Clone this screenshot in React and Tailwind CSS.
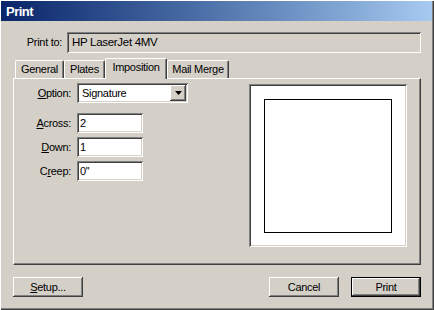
export default function App() {
  const raised =
    "shadow-[inset_-1px_-1px_0_#404040,inset_1px_1px_0_#ffffff,inset_-2px_-2px_0_#808080]";
  const sunken =
    "shadow-[inset_1px_1px_0_#808080,inset_-1px_-1px_0_#ffffff,inset_2px_2px_0_#404040,inset_-2px_-2px_0_#d4d0c8]";
  const tabBase =
    "h-[18px] flex items-center justify-center border-t border-l border-r border-t-white border-l-white border-r-[#404040] rounded-tl-[2px] rounded-tr-[2px] shadow-[inset_-1px_0_0_#808080]";

  return (
    <div className="w-[434px] h-[310px] bg-[#d4d0c8] pt-px pl-px pr-[2px] pb-[2px] shadow-[inset_1px_1px_0_#ffffff,inset_-1px_-1px_0_#404040,inset_-2px_-2px_0_#808080] flex flex-col text-[11px] leading-none text-black font-['Liberation_Sans',Arial,sans-serif] tracking-[-0.3px] overflow-hidden select-none">
      {/* Title bar */}
      <div className="h-[20px] bg-linear-to-r from-[#0a246a] to-[#a6caf0] flex items-center pl-[5px] text-white font-bold text-[13px] tracking-[-0.5px]">
        Print
      </div>

      {/* Content */}
      <div className="pl-[12px] flex flex-col">
        {/* Print to */}
        <div className="mt-[11px] flex items-center h-[21px]">
          <div className="w-[49px] text-right">Print to:</div>
          <div
            className={`ml-[5px] w-[354px] h-[21px] bg-[#d4d0c8] pl-[5px] flex items-center text-[11.5px] ${sunken}`}
          >
            HP LaserJet 4MV
          </div>
        </div>

        {/* Tabs */}
        <div className="mt-[5px] h-[20px] flex items-end pl-[2px] relative z-10">
          <div className={`${tabBase} w-[49px]`}>General</div>
          <div className={`${tabBase} w-[41px]`}>Plates</div>
          <div
            className={`h-[21px] -mb-px bg-[#d4d0c8] w-[62px] flex items-center justify-center pb-[3px] border-t border-l border-r border-t-white border-l-white border-r-[#404040] rounded-tl-[2px] rounded-tr-[2px] shadow-[inset_-1px_0_0_#808080]`}
          >
            Imposition
          </div>
          <div className={`${tabBase} w-[62px]`}>Mail Merge</div>
        </div>

        {/* Panel */}
        <div className="w-[408px] h-[187px] border border-t-white border-l-white border-r-[#404040] border-b-[#404040] shadow-[inset_-1px_-1px_0_#808080] flex">
          <div className="w-[235px] flex flex-col">
            <div className="mt-[4px] flex items-center h-[20px]">
              <div className="w-[57px] text-right">
                <span className="underline">O</span>ption:
              </div>
              <div
                className={`ml-[6px] w-[111px] h-[20px] bg-white flex items-center pl-[5px] relative ${sunken}`}
              >
                <span className="flex-1">Signature</span>
                <div
                  className={`mr-[2px] w-[16px] h-[16px] bg-[#d4d0c8] flex items-center justify-center ${raised}`}
                >
                  <svg width="7" height="4" viewBox="0 0 7 4">
                    <path d="M0 0h7L3.5 4z" fill="#000" />
                  </svg>
                </div>
              </div>
            </div>

            <div className="mt-[10px] flex flex-col gap-[4px]">
              {[
                ["A", "cross:", "2", ""],
                ["D", "own:", "1", ""],
                ["C", "reep:", "0''", "r"],
              ].map(([a, b, v, u]) => (
                <div key={a} className="flex items-center h-[20px]">
                  <div className="w-[57px] text-right">
                    {u ? (
                      <>
                        C<span className="underline">r</span>eep:
                      </>
                    ) : (
                      <>
                        <span className="underline">{a}</span>
                        {b}
                      </>
                    )}
                  </div>
                  <div
                    className={`ml-[6px] w-[66px] h-[20px] bg-white flex items-center pl-[3px] ${sunken}`}
                  >
                    {v}
                  </div>
                </div>
              ))}
            </div>
          </div>

          {/* Preview */}
          <div
            className={`mt-[5px] w-[158px] h-[163px] bg-white flex items-center justify-center ${sunken}`}
          >
            <div className="w-[128px] h-[134px] border border-black" />
          </div>
        </div>

        {/* Buttons */}
        <div className="mt-[12px] w-[408px] flex justify-between">
          <button
            className={`w-[70px] h-[20px] bg-[#d4d0c8] flex items-center justify-center ${raised}`}
          >
            <span className="underline">S</span>etup...
          </button>
          <div className="flex gap-[12px]">
            <button
              className={`w-[70px] h-[20px] bg-[#d4d0c8] flex items-center justify-center ${raised}`}
            >
              Cancel
            </button>
            <button className="w-[70px] h-[20px] bg-[#d4d0c8] flex items-center justify-center shadow-[inset_0_0_0_1px_#000000,inset_-2px_-2px_0_#404040,inset_2px_2px_0_#ffffff,inset_-3px_-3px_0_#808080]">
              Print
            </button>
          </div>
        </div>
      </div>
    </div>
  );
}
